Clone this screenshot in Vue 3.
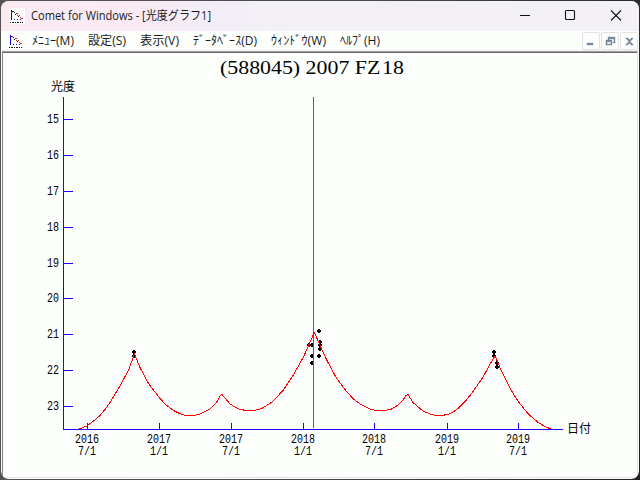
<template>
  <div class="desktop">
    <div class="window">
      <header class="title-bar">
        <span class="icon-box">
          <svg width="16" height="16" viewBox="0 0 16 16" shape-rendering="crispEdges">
            <path v-for="p in iconPaths" :key="p.fill" :d="p.d" :fill="p.fill" />
          </svg>
        </span>
        <svg class="caption" width="190" height="20">
          <text x="0" y="14" textLength="180" lengthAdjust="spacingAndGlyphs">Comet for Windows - [光度グラフ1]</text>
        </svg>
        <div class="window-buttons">
          <svg width="46" height="30"><path d="M19 14.5h10" /></svg>
          <svg width="46" height="30"><rect x="18.5" y="9.5" width="9" height="9" rx="1" /></svg>
          <svg width="46" height="30"><path d="M18 9.5l10 10M28 9.5l-10 10" /></svg>
        </div>
      </header>

      <nav class="menu-bar">
        <svg width="16" height="16" viewBox="0 0 16 16" shape-rendering="crispEdges">
          <path v-for="p in iconPaths" :key="p.fill" :d="p.d" :fill="p.fill" />
        </svg>
        <div class="menu-items">
          <svg v-for="m in menus" :key="m.label" :width="m.width" height="18">
            <text x="0" y="13" :textLength="m.width" lengthAdjust="spacingAndGlyphs">{{ m.label }}</text>
          </svg>
        </div>
        <div class="mdi-buttons">
          <button><svg width="16" height="16"><path d="M4 10h6v2h-6z" /></svg></button>
          <button>
            <svg width="16" height="16">
              <path d="M6 4h7v6h-2v-1h1v-3h-5v1h-1zM4 7h6v5h-6zM5 9v2h4v-2z" fill-rule="evenodd" />
            </svg>
          </button>
          <button>
            <svg width="16" height="16">
              <path d="M5 5h2v1h1v1h1v-1h1v-1h2v1h-1v1h-1v1h-1v1h1v1h1v1h1v1h-2v-1h-1v-1h-1v1h-1v1h-2v-1h1v-1h1v-1h1v-1h-1v-1h-1v-1h-1z" />
            </svg>
          </button>
        </div>
      </nav>

      <main class="client">
        <svg class="chart" width="634" height="424" viewBox="3 53 634 424">
          <text class="chart-title" x="220" y="73.5" textLength="184" lengthAdjust="spacingAndGlyphs">(588045) 2007 FZ<tspan dx="1.5">18</tspan></text>
          <text class="axis-name" x="51" y="91">光度</text>
          <text class="axis-name" x="567" y="433">日付</text>

          <g class="axis">
            <path d="M63.5 97V429.5H563" />
            <path v-for="t in magTicks" :key="t.label" :d="`M63 ${t.y + 0.5}h10`" />
            <path v-for="t in dateTicks" :key="t.x" :d="`M${t.x + 0.5} 423v7`" />
          </g>

          <g class="label">
            <text v-for="t in magTicks" :key="t.label" x="47" :y="t.y + 4" textLength="12" lengthAdjust="spacingAndGlyphs">{{ t.label }}</text>
            <template v-for="t in dateTicks" :key="t.x">
              <text :x="t.x - 12" y="443" textLength="24" lengthAdjust="spacingAndGlyphs">{{ t.year }}</text>
              <text :x="t.x - 9" y="455" textLength="18" lengthAdjust="spacingAndGlyphs">{{ t.day }}</text>
            </template>
          </g>

          <path v-for="(o, i) in observations" :key="i" class="dot" :d="`M${o[0] - 1} ${o[1] - 2}h2v1h1v2h-1v1h-2v-1h-1v-2h1z`" />
          <path class="perihelion" d="M313.5 97V428" />
          <polyline class="curve" :points="curve" />
        </svg>
      </main>
    </div>
  </div>
</template>

<script setup>
const menus = [
  { label: "ﾒﾆｭｰ(M)", width: 42 },
  { label: "設定(S)", width: 38 },
  { label: "表示(V)", width: 39 },
  { label: "ﾃﾞｰﾀﾍﾞｰｽ(D)", width: 64 },
  { label: "ｳｨﾝﾄﾞｳ(W)", width: 55 },
  { label: "ﾍﾙﾌﾟ(H)", width: 40 },
];

const iconPaths = [
  { fill: "#1400f0", d: "M2 2h1v10h-1zM5 11h1v1h-1zM8 11h1v1h-1zM11 11h1v1h-1z" },
  { fill: "#e01818", d: "M4 3h1v1h-1zM7 5h2v1h-2zM8 7h1v1h-1zM10 7h1v1h-1zM11 9h1v1h-1zM12 10h2v1h-2z" },
  { fill: "#181010", d: "M3 3h1v1h-1zM5 4h1v1h-1zM6 6h1v1h-1zM9 8h1v1h-1zM1 14h1v1h-1zM3 14h2v1h-2zM6 14h1v1h-1zM8 14h2v1h-2zM11 14h1v1h-1zM13 14h1v1h-1z" },
];

const magTicks = [119, 155, 191, 227, 263, 298, 334, 370, 406].map((y, i) => ({
  y,
  label: String(15 + i),
}));

const dateTicks = [
  { x: 87, year: "2016", day: "7/1" },
  { x: 159, year: "2017", day: "1/1" },
  { x: 231, year: "2017", day: "7/1" },
  { x: 303, year: "2018", day: "1/1" },
  { x: 374, year: "2018", day: "7/1" },
  { x: 447, year: "2019", day: "1/1" },
  { x: 518, year: "2019", day: "7/1" },
];

const observations = [
  [134, 352], [134, 356],
  [309, 345], [312, 345], [312, 356], [312, 363],
  [319, 331], [320, 342], [320, 345], [320, 349], [319, 356],
  [494, 352], [494, 356], [497, 363], [497, 367],
];

const curve = [
  [79, 429], [87, 426], [93, 421.5], [100, 415.5], [105, 409.5], [110, 402.5], [120, 386], [128.5, 370],
  [134.5, 354], [140, 367.5], [148.5, 383.5], [160, 398.5], [166, 405], [173.5, 410.5], [180, 413.8],
  [186, 415.5], [194, 415.5], [200, 414], [210, 409], [216.5, 402.5], [220, 396], [222, 394.5],
  [225, 398], [230, 404], [235, 407], [240, 409.3], [246, 410.5], [254, 410.5], [261.7, 408.5],
  [271.7, 402.3], [277, 397], [283.3, 390], [293.3, 375], [303.3, 357.3], [309.5, 343.5], [314.3, 332.5],
  [319, 343], [326.7, 360], [336.7, 378.5], [346.7, 391.7], [353, 398.5], [360, 404], [370, 409],
  [376, 410.5], [384, 410.5], [391, 409.3], [398.3, 405], [403, 400], [406, 395.5], [408, 394.5],
  [413, 402.5], [423, 411], [431.7, 414.7], [437, 415.5], [442, 415.5], [448, 414.3], [454, 411.5],
  [460, 406.7], [466, 400.5], [471.7, 393.3], [483.3, 376.7], [489, 366], [495, 355.7], [501.7, 371.7],
  [510, 388.3], [518.3, 401.7], [528.3, 414], [538.3, 422.7], [546.7, 427.3], [551, 429],
]
  .map((p) => p.join(","))
  .join(" ");
</script>

<style>
body {
  margin: 0;
  overflow: hidden;
}
</style>

<style scoped>
.desktop {
  width: 640px;
  height: 480px;
  box-sizing: border-box;
  padding: 1px;
  background: linear-gradient(100deg, #555 0%, #4a4a4a 50%, #222 100%);
}

.window {
  display: flex;
  flex-direction: column;
  width: 638px;
  height: 478px;
  border-radius: 8px;
  overflow: hidden;
  background: #fdfffd;
}

.title-bar {
  display: flex;
  align-items: center;
  height: 30px;
  flex: none;
  padding-left: 8px;
  background: linear-gradient(100deg, #fbeaf2 0%, #f9ebf5 22%, #f3eef9 33%, #f3f1f5 46%);
}

.icon-box {
  display: flex;
  width: 16px;
  height: 16px;
  background: #fff;
}

.caption {
  margin-left: 6px;
  overflow: visible;
}

.caption text,
.menu-items text {
  font-family: "Open Sans", "Noto Sans CJK JP", sans-serif;
  font-size: 12px;
  fill: #1a1a1a;
}

.window-buttons {
  display: flex;
  margin-left: auto;
}

.window-buttons path,
.window-buttons rect {
  fill: none;
  stroke: #111;
  stroke-width: 1.1;
}

.menu-bar {
  display: flex;
  align-items: center;
  flex: none;
  box-sizing: border-box;
  height: 20px;
  padding-left: 7px;
  border-bottom: 1px solid #f0f0f0;
}

.menu-items {
  display: flex;
  gap: 14px;
  margin-left: 8px;
}

.menu-items svg {
  overflow: visible;
}

.mdi-buttons {
  display: flex;
  gap: 1px;
  margin: 1px 1px 0 auto;
}

.mdi-buttons button {
  display: flex;
  align-items: center;
  justify-content: center;
  width: 18px;
  height: 18px;
  padding: 0;
  border: 1px solid #e3e3e3;
  border-radius: 2px;
  background: #fdfffd;
}

.mdi-buttons svg {
  flex: none;
}

.mdi-buttons path {
  fill: #778899;
  stroke: #778899;
  stroke-width: 0.4;
}

.client {
  flex: 1;
  margin: 0 1px 1px;
  border-top: 1px solid #a0a0a0;
  border-left: 1px solid #808080;
  border-right: 1px solid #e3e3e3;
  border-bottom: 1px solid #e3e3e3;
}

.chart {
  display: block;
  border-top: 1px solid #696969;
}

.chart-title {
  font-family: "Liberation Serif", serif;
  font-size: 18px;
}

.axis-name {
  font-family: "Noto Sans CJK JP", sans-serif;
  font-size: 12px;
}

.label text {
  font-family: "Liberation Mono", monospace;
  font-size: 12.5px;
}

.axis path {
  fill: none;
  stroke: #2800ff;
  shape-rendering: crispEdges;
}

.perihelion {
  stroke: #f000f0;
  shape-rendering: crispEdges;
}

.dot {
  fill: #000;
  shape-rendering: crispEdges;
}

.curve {
  fill: none;
  stroke: #ff0000;
  shape-rendering: crispEdges;
}
</style>
